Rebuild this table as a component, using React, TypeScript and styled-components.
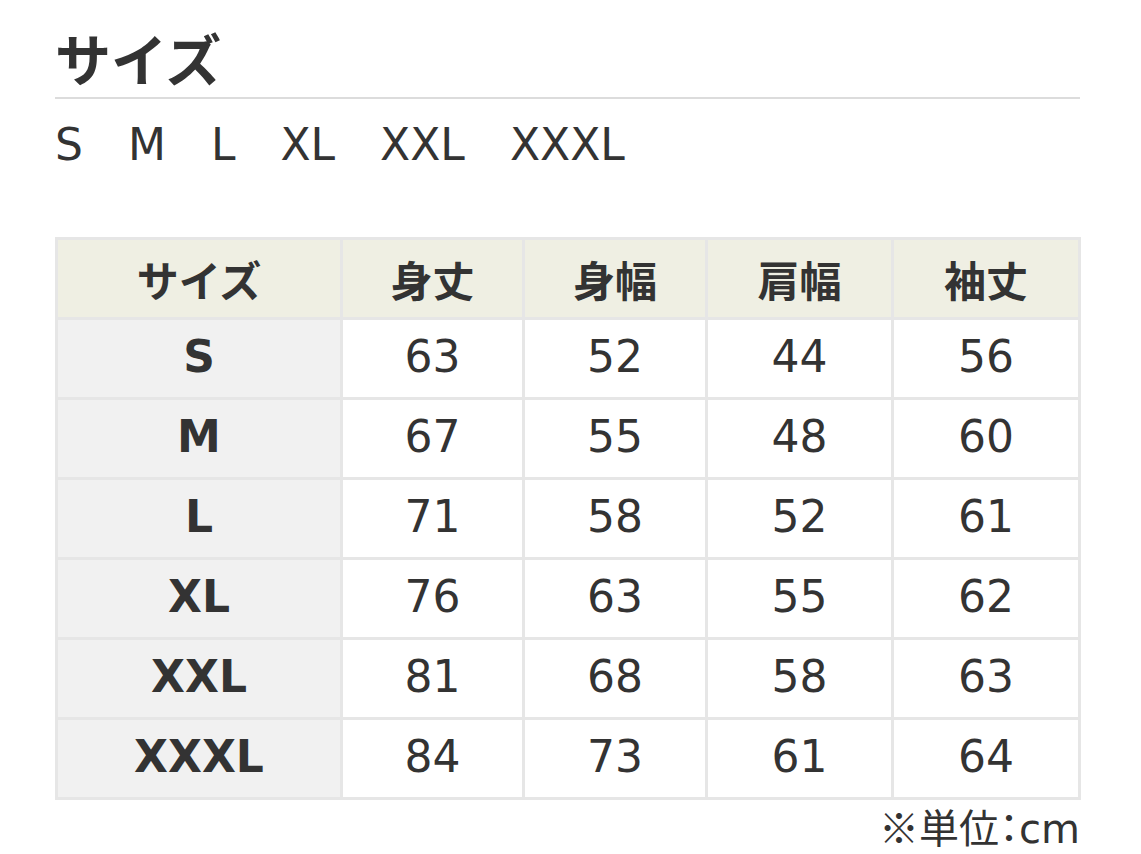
import React from "react";
import styled, { createGlobalStyle } from "styled-components";

const Global = createGlobalStyle`
  html, body { margin: 0; padding: 0; background: #ffffff; }
  body {
    font-family: "DejaVu Sans", "Noto Sans CJK JP", sans-serif;
    color: #333333;
  }
`;

const Page = styled.div`
  width: 1025px;
  padding: 25px 0 0 55px;
`;

const Title = styled.h2`
  margin: 0;
  font-family: "Noto Sans CJK JP", sans-serif;
  font-weight: 700;
  font-size: 56px;
  line-height: 64px;
  padding-bottom: 8px;
  border-bottom: 2px solid #dcdcdc;
  color: #333333;
`;

const SizeList = styled.ul`
  display: flex;
  gap: 45px;
  list-style: none;
  margin: 21px 0 0;
  padding: 0;
  font-size: 44px;
  line-height: 50px;
`;

const SizeItem = styled.li`
  margin: 0;
`;

const Table = styled.table`
  margin-top: 67px;
  width: 1023px;
  table-layout: fixed;
  border-collapse: collapse;
  border: 3px solid #e6e6e6;
`;

const Cell = styled.td<{ $kind: "head" | "label" | "value" }>`
  height: ${(p) => (p.$kind === "head" ? "77px" : "73px")};
  border: 3px solid #e6e6e6;
  text-align: center;
  vertical-align: middle;
  padding: 0 0 ${(p) => (p.$kind === "head" ? "0" : "4px")};
  color: #333333;
  background: ${(p) =>
    p.$kind === "head" ? "#efefe3" : p.$kind === "label" ? "#f1f1f1" : "#ffffff"};
  font-family: ${(p) =>
    p.$kind === "head"
      ? `"Noto Sans CJK JP", sans-serif`
      : `"DejaVu Sans", "Noto Sans CJK JP", sans-serif`};
  font-weight: ${(p) => (p.$kind === "value" ? 400 : 700)};
  font-size: ${(p) => (p.$kind === "head" ? "42px" : "44px")};
  line-height: 1;
`;

const Note = styled.p`
  margin: 6px 0 0;
  text-align: right;
  font-size: 40px;
  line-height: 40px;
  font-family: "Noto Sans CJK JP", sans-serif;
`;

const Latin = styled.span`
  font-family: "DejaVu Sans", sans-serif;
`;

const Colon = styled.span`
  font-feature-settings: "palt";
`;

const widths = [285, 182, 183, 186, 187];
const headers = ["サイズ", "身丈", "身幅", "肩幅", "袖丈"];
const rows: [string, number, number, number, number][] = [
  ["S", 63, 52, 44, 56],
  ["M", 67, 55, 48, 60],
  ["L", 71, 58, 52, 61],
  ["XL", 76, 63, 55, 62],
  ["XXL", 81, 68, 58, 63],
  ["XXXL", 84, 73, 61, 64],
];

export default function App() {
  return (
    <>
      <Global />
      <Page>
        <Title>サイズ</Title>
        <SizeList>
          {rows.map((r) => (
            <SizeItem key={r[0]}>{r[0]}</SizeItem>
          ))}
        </SizeList>
        <Table>
          <colgroup>
            {widths.map((w, i) => (
              <col key={i} style={{ width: w }} />
            ))}
          </colgroup>
          <thead>
            <tr>
              {headers.map((h) => (
                <Cell as="th" $kind="head" key={h}>
                  {h}
                </Cell>
              ))}
            </tr>
          </thead>
          <tbody>
            {rows.map((r) => (
              <tr key={r[0]}>
                <Cell as="th" $kind="label">
                  {r[0]}
                </Cell>
                {r.slice(1).map((v, i) => (
                  <Cell $kind="value" key={i}>
                    {v}
                  </Cell>
                ))}
              </tr>
            ))}
          </tbody>
        </Table>
        <Note>
          ※単位<Colon>：</Colon>
          <Latin>cm</Latin>
        </Note>
      </Page>
    </>
  );
}
